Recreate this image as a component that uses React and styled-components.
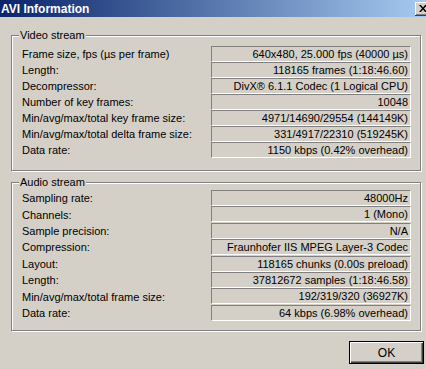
import styled, { createGlobalStyle } from 'styled-components';

const GlobalStyle = createGlobalStyle`
  html, body {
    margin: 0;
    padding: 0;
    background: #d4d0c8;
  }
  body {
    font-family: 'Liberation Sans', Arial, sans-serif;
    font-size: 11px;
    color: #000;
  }
`;

const Window = styled.div`
  width: 426px;
  height: 369px;
  overflow: hidden;
  background: #d4d0c8;
  display: flex;
  flex-direction: column;
`;

const TitleBar = styled.div`
  height: 17px;
  flex: none;
  display: flex;
  align-items: center;
  justify-content: space-between;
  padding-left: 1px;
  background: linear-gradient(to right, #0a246a, #a6caf0);
  color: #fff;
  font-weight: bold;
  font-size: 12px;
`;

const CloseButton = styled.div`
  width: 16px;
  height: 14px;
  margin-right: -5px;
  box-sizing: border-box;
  background: #d4d0c8;
  box-shadow: inset -1px -1px 0 #404040, inset 1px 1px 0 #fff,
    inset -2px -2px 0 #808080;
  display: flex;
  align-items: center;
  justify-content: center;
`;

const Content = styled.div`
  padding: 18px 5px 0 11px;
  display: flex;
  flex-direction: column;
`;

const Group = styled.div`
  position: relative;
  border: 1px solid #808080;
  box-shadow: inset 1px 1px 0 #fff, 1px 1px 0 #fff;
  padding: ${(p) => p.$pad};
  margin-top: ${(p) => p.$top || 0}px;
  display: grid;
  grid-template-columns: 1fr 200px;
  grid-auto-rows: ${(p) => p.$row}px;
`;

const Caption = styled.span`
  position: absolute;
  top: -7px;
  left: 7px;
  padding: 0 1px;
  background: #d4d0c8;
  line-height: 13px;
`;

const Label = styled.div`
  padding-left: 10px;
  display: flex;
  align-items: center;
  white-space: nowrap;
`;

const Value = styled.div`
  box-sizing: border-box;
  height: 16px;
  border-top: 1px solid #808080;
  border-left: 1px solid #808080;
  border-bottom: 1px solid #fff;
  border-right: 1px solid #fff;
  text-align: right;
  padding: 0 2px 0 0;
  line-height: 15px;
  white-space: nowrap;
  overflow: hidden;
`;

const Footer = styled.div`
  display: flex;
  justify-content: flex-end;
  padding-top: 10px;
  margin-right: -3px;
`;

const Button = styled.button`
  width: 75px;
  height: 23px;
  box-sizing: border-box;
  border: 1px solid #000;
  background: #d4d0c8;
  box-shadow: inset 1px 1px 0 #fff, inset -1px -1px 0 #404040,
    inset -2px -2px 0 #808080;
  font-family: 'Liberation Sans', Arial, sans-serif;
  font-size: 12px;
  color: #000;
  padding: 0;
`;

const video = [
  ['Frame size, fps (\u00b5s per frame)', '640x480, 25.000 fps (40000 \u00b5s)'],
  ['Length:', '118165 frames (1:18:46.60)'],
  ['Decompressor:', 'DivX\u00ae 6.1.1 Codec (1 Logical CPU)'],
  ['Number of key frames:', '10048'],
  ['Min/avg/max/total key frame size:', '4971/14690/29554 (144149K)'],
  ['Min/avg/max/total delta frame size:', '331/4917/22310 (519245K)'],
  ['Data rate:', '1150 kbps (0.42% overhead)'],
];

const audio = [
  ['Sampling rate:', '48000Hz'],
  ['Channels:', '1 (Mono)'],
  ['Sample precision:', 'N/A'],
  ['Compression:', 'Fraunhofer IIS MPEG Layer-3 Codec'],
  ['Layout:', '118165 chunks (0.00s preload)'],
  ['Length:', '37812672 samples (1:18:46.58)'],
  ['Min/avg/max/total frame size:', '192/319/320 (36927K)'],
  ['Data rate:', '64 kbps (6.98% overhead)'],
];

function Rows({ items }) {
  return items.map(([label, value]) => [
    <Label key={label + 'l'}>{label}</Label>,
    <Value key={label + 'v'}>{value}</Value>,
  ]);
}

export default function App() {
  return (
    <Window>
      <GlobalStyle />
      <TitleBar>
        <span>AVI Information</span>
        <CloseButton>
          <svg width="8" height="7" viewBox="0 0 8 7">
            <path d="M0 0h2l2 2.5L6 0h2L5 3.5 8 7H6L4 4.5 2 7H0l3-3.5z" fill="#000" />
          </svg>
        </CloseButton>
      </TitleBar>
      <Content>
        <Group $pad="10px 9px 12px 0" $row={16}>
          <Caption>Video stream</Caption>
          <Rows items={video} />
        </Group>
        <Group $pad="7px 9px 9px 0" $row={16.4} $top={11}>
          <Caption>Audio stream</Caption>
          <Rows items={audio} />
        </Group>
        <Footer>
          <Button>OK</Button>
        </Footer>
      </Content>
    </Window>
  );
}
